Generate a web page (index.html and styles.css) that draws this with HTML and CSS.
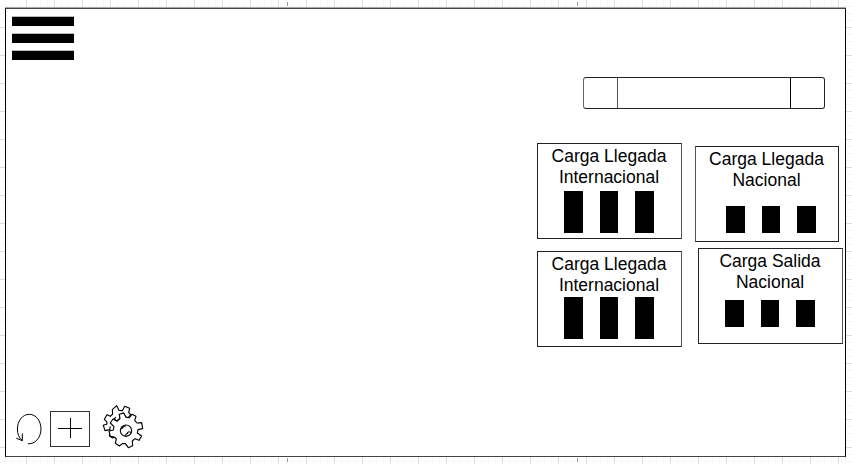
FILE: index.html
```html
<!DOCTYPE html>
<html lang="es">
<head>
<meta charset="utf-8">
<title>Carga</title>
<link rel="stylesheet" href="styles.css">
</head>
<body>
<main class="frame">
  <nav class="menu"><span></span><span></span><span></span></nav>
  <div class="content">
    <div class="search"><span class="cell"></span><span class="field"></span><span class="cell"></span></div>
    <div class="columns">
      <div class="column">
        <section class="card soft-right">
          <h2>Carga Llegada<br>Internacional</h2>
          <div class="bars tall"><i></i><i></i><i></i></div>
        </section>
        <section class="card soft-right lower">
          <h2>Carga Llegada<br>Internacional</h2>
          <div class="bars tall close"><i></i><i></i><i></i></div>
        </section>
      </div>
      <div class="column second">
        <section class="card soft-left arrival">
          <h2>Carga Llegada<br>Nacional</h2>
          <div class="bars short"><i></i><i></i><i></i></div>
        </section>
        <section class="card soft-right outgoing">
          <h2>Carga Salida<br>Nacional</h2>
          <div class="bars short near"><i></i><i></i><i></i></div>
        </section>
      </div>
    </div>
  </div>
  <footer class="tools">
    <svg class="refresh" width="30" height="36" viewBox="14 411 30 36">
      <path d="M28 443.7C35 444.5 41 437.5 41 429C41 421 36 414.3 29.3 414.3C22.5 414.3 17.4 421 17.4 429C17.4 434 19 438 22.3 440.5M22.3 433.5V440.7L16.3 438.2"/>
    </svg>
    <div class="add">
      <svg width="24" height="22" viewBox="0 0 24 22"><path d="M0 10.5H24M12.5 0V20"/></svg>
    </div>
    <svg class="gears" width="42" height="46" viewBox="102 403 42 46">
      <g transform="translate(0 395) scale(.33333)">
        <path d="M331 94L329 104L315 107L310 91L321 87L320 80L313 73L321 59L331 64L338 57L337 44L350 32L357 46L367 47L374 34L389 40L386 53L392 59L386 66L378 67L371 54L358 60L360 70L350 78L342 71L348 67M329 104L333 109L328 122L338 129L346 124"/>
        <path d="M364 56L371 54L378 67L388 68L396 58L408 64L404 76L411 84L425 83L428 101L414 104L412 114L425 123L417 136L405 131L397 138L398 152L385 158L376 146L367 146L358 153L346 145L349 132L343 126L331 124L327 108L340 105L342 95L331 84L339 72L351 79L360 71L358 58Z"/>
        <circle cx="378" cy="107" r="17"/>
        <path class="open" d="M363 101C367 102 368 99 368 95C372 97 376 94 377 91M377 123C377 116 380 115 383 116C381 111 387 108 393 113"/>
      </g>
    </svg>
  </footer>
</main>
<i class="tick top-left"></i><i class="tick top-right"></i>
<i class="tick bottom-left"></i><i class="tick bottom-right"></i>
</body>
</html>
```
FILE: styles.css
```css
* { box-sizing: border-box; }
html, body { margin: 0; width: 852px; height: 464px; overflow: hidden; }
body {
  padding: 8px 6px 8px 5px;
  font-family: "Liberation Sans", Arial, sans-serif;
  color: #000;
  background-color: #fff;
  background-image:
    linear-gradient(90deg, #dedede 1px, transparent 1px),
    linear-gradient(#dedede 1px, transparent 1px),
    linear-gradient(90deg, #f8f8f8 1px, transparent 1px),
    linear-gradient(#f8f8f8 1px, transparent 1px);
  background-size: 28px 28px, 28px 28px, 7px 7px, 7px 7px;
  background-position: 26px 0, 0 27px, 5px 0, 0 6px;
}
.frame {
  display: flex;
  flex-direction: column;
  width: 841px;
  height: 449px;
  background: #fff;
  border: 1px solid #000;
  border-top-color: #444;
  border-bottom-color: #444;
  box-shadow: 0 -1px #aaa;
}
.menu {
  display: flex;
  flex-direction: column;
  gap: 8px;
  width: 62px;
  margin: 8px 0 0 6px;
}
.menu span { height: 9px; background: #000; box-shadow: 0 -1px #bbb; }
.content { margin: 17px 0 0 531px; }
.search {
  display: flex;
  width: 242px;
  height: 32px;
  margin-left: 46px;
  border: 1px solid #222;
  border-left-color: #666;
  border-radius: 3px;
}
.cell { width: 33px; }
.field { flex: 1; border: solid #000; border-width: 0 1px; border-left-color: #555; }
.columns { display: flex; gap: 13px; margin-top: 34px; }
.second { margin-top: 3px; }
.card {
  width: 145px;
  height: 96px;
  border: 1px solid #222;
  padding-top: 2px;
}
.soft-right { border-right-color: #555; }
.soft-left { border-left-color: #555; }
.lower { margin-top: 12px; }
.arrival { width: 144px; height: 96px; }
.outgoing { margin: 6px 0 0 3px; }
h2 {
  margin: 0 1px 0 0;
  font-size: 17.5px;
  font-weight: 400;
  line-height: 21px;
  text-align: center;
}
.bars { display: flex; gap: 17px; margin: 3px 0 0 26px; }
.bars i { width: 18.7px; background: #000; }
.tall i { height: 42px; }
.short i { height: 27px; }
.close { margin-top: 1px; }
.short { margin: 15px 0 0 30px; }
.near { margin: 7px 0 0 26px; }
svg { fill: none; stroke: #000; stroke-width: 1; display: block; }
.tools { display: flex; align-items: flex-start; margin: auto 0 7px 8px; }
.refresh { margin-top: 8px; }
.add {
  display: grid;
  place-items: center;
  width: 40px;
  height: 36px;
  margin: 8px 12px 0 6px;
  border: 1px solid #333;
}
.gears g { stroke-width: 3.4; stroke-linejoin: round; }
.gears path { fill: #fff; }
.gears .open { fill: none; }
.tick { position: absolute; width: 1px; height: 4px; background: #999; }
.top-left { left: 287px; top: 2px; }
.top-right { left: 577px; top: 2px; }
.bottom-left { left: 287px; top: 458px; }
.bottom-right { left: 577px; top: 458px; }
```
